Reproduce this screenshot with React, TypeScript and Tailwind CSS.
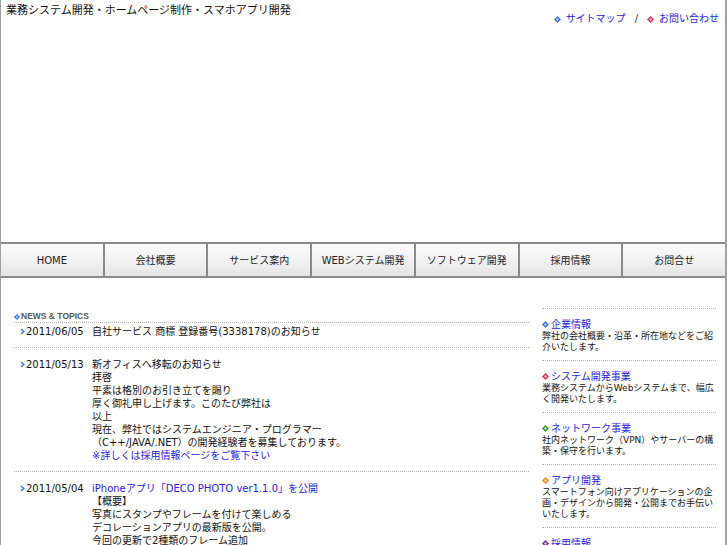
import React from 'react';

type Color = { outer: string; inner: string };

const Diamond: React.FC<{ color: Color; className?: string }> = ({ color, className }) => (
  <svg viewBox="0 0 7 7" className={className ?? 'w-[7px] h-[7px] shrink-0'}>
    <polygon points="3.5,0 7,3.5 3.5,7 0,3.5" fill={color.outer} />
    <polygon points="3.5,2 5,3.5 3.5,5 2,3.5" fill={color.inner} />
  </svg>
);

const Chevron: React.FC = () => (
  <svg viewBox="0 0 5 7" className="w-[5px] h-[7px]">
    <path d="M1 1 L3.8 3.5 L1 6" fill="none" stroke="#2a72e0" strokeWidth="1.4" />
  </svg>
);

const blue = { outer: '#3b74e0', inner: '#bcd3ff' };
const red = { outer: '#e0305a', inner: '#ffc2d0' };
const green = { outer: '#2f9a2f', inner: '#c4f0c4' };
const orange = { outer: '#f08a1c', inner: '#ffe0b8' };
const purple = { outer: '#7a2a8a', inner: '#e6c4ee' };

const navItems = ['HOME', '会社概要', 'サービス案内', 'WEBシステム開発', 'ソフトウェア開発', '採用情報', 'お問合せ'];

const sideItems = [
  { title: '企業情報', color: blue, text: '弊社の会社概要・沿革・所在地などをご紹介いたします。' },
  { title: 'システム開発事業', color: red, text: '業務システムからWebシステムまで、幅広く開発いたします。' },
  { title: 'ネットワーク事業', color: green, text: '社内ネットワーク（VPN）やサーバーの構築・保守を行います。' },
  { title: 'アプリ開発', color: orange, text: 'スマートフォン向けアプリケーションの企画・デザインから開発・公開までお手伝いいたします。' },
  { title: '採用情報', color: purple, text: '現在、システムエンジニア・プログラマーを募集しております。' },
];

const NewsRow: React.FC<{ date: string; first?: boolean; children: React.ReactNode }> = ({ date, first, children }) => (
  <div className={`flex border-b border-dotted border-[#b4b4b4] pb-[9px] ${first ? 'pt-[2px]' : 'pt-[10px]'}`}>
    <div className="w-[78px] flex items-start pl-[6px]">
      <div className="h-[13px] flex items-center mr-[1px]">
        <Chevron />
      </div>
      <span>{date}</span>
    </div>
    <div className="flex-1">{children}</div>
  </div>
);

export default function App() {
  return (
    <div className="w-[727px] h-[545px] overflow-hidden bg-white border-l border-r-2 border-[#a0a0a0] text-[#111] font-['DejaVu_Sans','Noto_Sans_CJK_JP',sans-serif]">
      {/* Header */}
      <div className="h-[242px] flex justify-between items-start">
        <p className="pl-[5px] pt-[4px] text-[11px] leading-[14px]">業務システム開発・ホームページ制作・スマホアプリ開発</p>
        <div className="shrink-0 whitespace-nowrap pr-[6px] pt-[12px] flex items-center gap-[5px] text-[10px] leading-[14px]">
          <Diamond color={blue} />
          <a className="text-[#2424e0]">サイトマップ</a>
          <span className="mx-[4px] text-[#333]">/</span>
          <Diamond color={red} />
          <a className="text-[#2424e0]">お問い合わせ</a>
        </div>
      </div>

      {/* Navigation */}
      <div className="h-[36px] flex border-t-2 border-b-2 border-[#8a8a8a] bg-gradient-to-b from-[#fbfbfb] via-[#f2f2f2] to-[#e4e4e4]">
        {navItems.map((item, i) => (
          <div
            key={item}
            className={`flex-1 flex items-center justify-center text-[10px] text-[#222] ${i < navItems.length - 1 ? 'border-r-2 border-[#8a8a8a]' : ''}`}
          >
            {item}
          </div>
        ))}
      </div>

      {/* Main */}
      <div className="flex pl-[13px]">
        <div className="w-[515px] pt-[33px] text-[10px] leading-[13px]">
          <div className="flex items-center gap-[1px] h-[12px] border-b border-dotted border-[#b4b4b4]">
            <Diamond color={blue} className="w-[6px] h-[6px]" />
            <span className="font-['Liberation_Sans',sans-serif] font-bold text-[8.5px] text-[#555]">NEWS &amp; TOPICS</span>
          </div>

          <NewsRow date="2011/06/05" first>
            自社サービス 商標 登録番号(3338178)のお知らせ
          </NewsRow>

          <NewsRow date="2011/05/13">
            <p>新オフィスへ移転のお知らせ</p>
            <p>拝啓</p>
            <p>平素は格別のお引き立てを賜り</p>
            <p>厚く御礼申し上げます。このたび弊社は</p>
            <p>以上</p>
            <p>現在、弊社ではシステムエンジニア・プログラマー</p>
            <p>（C++/JAVA/.NET）の開発経験者を募集しております。</p>
            <a className="text-[#2424e0]">※詳しくは採用情報ページをご覧下さい</a>
          </NewsRow>

          <NewsRow date="2011/05/04">
            <a className="text-[#2424e0]">iPhoneアプリ「DECO PHOTO ver1.1.0」を公開</a>
            <p>【概要】</p>
            <p>写真にスタンプやフレームを付けて楽しめる</p>
            <p>デコレーションアプリの最新版を公開。</p>
            <p>今回の更新で2種類のフレーム追加</p>
          </NewsRow>
        </div>

        {/* Sidebar */}
        <div className="w-[174px] ml-[13px] pt-[30px]">
          {sideItems.map((s) => (
            <div key={s.title} className="border-t border-dotted border-[#b4b4b4] pt-[8px] pb-[7px]">
              <div className="flex items-center gap-[2px] h-[14px]">
                <Diamond color={s.color} />
                <a className="text-[10px] text-[#2424e0]">{s.title}</a>
              </div>
              <p className="text-[9px] leading-[11px] text-[#111]">{s.text}</p>
            </div>
          ))}
        </div>
      </div>
    </div>
  );
}
